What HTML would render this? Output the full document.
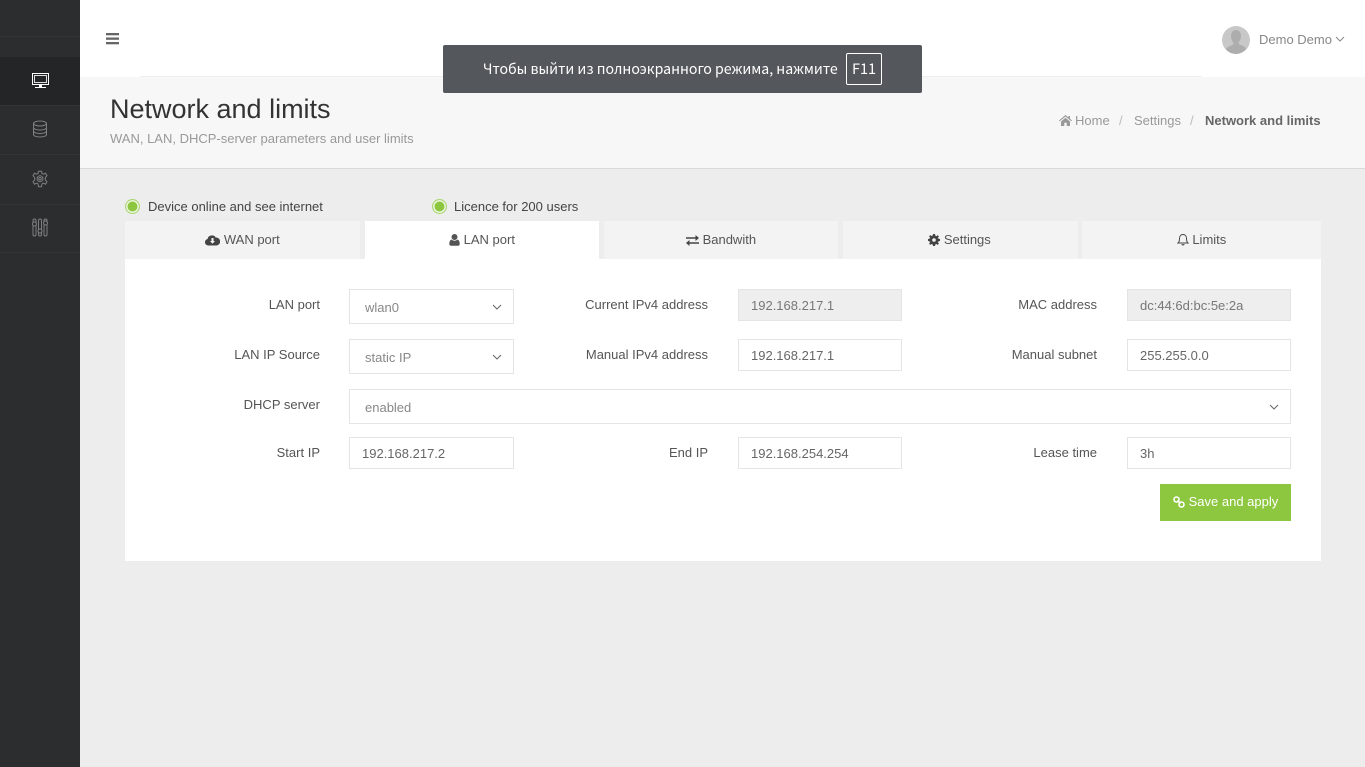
<!DOCTYPE html>
<html lang="en"><head><meta charset="utf-8"><title>Network and limits</title>
<style>
*{box-sizing:border-box}
html,body{margin:0;padding:0;width:1365px;height:767px;overflow:hidden;background:#ededed;font-family:"Liberation Sans",Arial,sans-serif;font-size:13px;color:#555}
.a{position:absolute;white-space:nowrap}
#side{left:0;top:0;width:80px;height:767px;background:#2b2d2f}
.ln{position:absolute;left:0;width:80px;height:1px;background:#323436}
#top{left:80px;top:0;width:1285px;height:77px;background:#fff}
#head{left:80px;top:77px;width:1285px;height:92px;background:#f7f7f7;border-bottom:1px solid #d9d9d9}
.tab{position:absolute;top:221px;height:38px;background:#f3f3f3;line-height:37px;text-align:center;color:#555}
.tab svg{vertical-align:-2px}
.lb{position:absolute;text-align:right;color:#555;line-height:20px;height:20px}
.in{position:absolute;height:32px;width:164px;border:1px solid #e4e4e4;background:#fff;padding-left:12px;line-height:31px;color:#666}
.dis{background:#eee;color:#777}
.sel{position:absolute;height:35px;border:1px solid #e4e4e4;background:#fff;padding-left:15px;line-height:35px;color:#888}
.sel svg{position:absolute;right:11px;top:14px}
.dot{position:absolute;top:199px;width:15px;height:15px;border-radius:50%;background:#8dc63f;border:1px solid #a9d672;box-shadow:inset 0 0 0 1.5px #eef6e2}
</style></head><body>
<div id="side" class="a">
<div class="ln" style="top:36px"></div>
<div class="a" style="left:0;top:57px;width:80px;height:48px;background:#232527"></div>
<div class="ln" style="top:105px"></div><div class="ln" style="top:154px"></div><div class="ln" style="top:204px"></div><div class="ln" style="top:252px"></div>
<svg class="a" style="left:32px;top:73px" width="17" height="16" viewBox="0 0 17 16"><rect x=".5" y=".5" width="16" height="11" fill="none" stroke="#fff"/><rect x="2.500" y="2.500" width="12" height="7" fill="none" stroke="#ddd" stroke-width="1"/><rect x="7" y="12" width="3" height="2" fill="#fff"/><rect x="3" y="14" width="11" height="1" fill="#fff"/></svg>
<svg class="a" style="left:32px;top:120px" width="16" height="18" viewBox="0 0 16 18" fill="none" stroke="#808080" stroke-width="1"><ellipse cx="8" cy="3.500" rx="6.500" ry="2.500"/><path d="M1.500 3.500V14.500C1.500 16 4.500 17 8 17S14.500 16 14.500 14.500V3.500M1.500 7.500C1.500 9 4.500 10 8 10S14.500 9 14.500 7.500M1.500 11C1.500 12.500 4.500 13.500 8 13.500S14.500 12.500 14.500 11"/></svg>
<svg class="a" style="left:32px;top:170px" width="16" height="18" viewBox="0 0 16 18" fill="none" stroke="#808080" stroke-width="1"><path d="M6.500 1H9.500L10 3.300 11.500 4 13.500 3 15 5.500 13.300 7.200V9.800L15 11.500 13.500 14 11.500 13 10 13.700 9.500 16.500H6.500L6 13.700 4.500 13 2.500 14 1 11.500 2.700 9.800V7.200L1 5.500 2.500 3 4.500 4 6 3.300Z" transform="translate(0 .2)"/><circle cx="8" cy="8.700" r="3"/><circle cx="8" cy="8.700" r="1.200"/></svg>
<svg class="a" style="left:32px;top:218px" width="16" height="19" viewBox="0 0 16 19" fill="none" stroke="#808080" stroke-width="1"><rect x="1" y="1" width="3" height="17" rx="1.500"/><rect x="6.500" y="1" width="3" height="17" rx="1.500"/><rect x="12" y="1" width="3" height="17" rx="1.500"/><circle cx="2.500" cy="6" r="2" fill="#2b2d2f"/><circle cx="8" cy="13" r="2" fill="#2b2d2f"/><circle cx="13.500" cy="5" r="2" fill="#2b2d2f"/></svg>
</div>

<div id="top" class="a"></div>
<div class="a" style="left:140px;top:76px;width:1062px;height:1px;background:#eee"></div>
<svg class="a" style="left:106px;top:33px" width="13" height="12" viewBox="0 0 13 12" fill="#666"><rect y="0" width="13" height="2.300"/><rect y="4.500" width="13" height="2.300"/><rect y="9" width="13" height="2.300"/></svg>
<svg class="a" style="left:1222px;top:26px" width="28" height="28" viewBox="0 0 28 28"><circle cx="14" cy="14" r="14" fill="#c8c8c8"/><path d="M14 4c3 0 5 2.500 5 6 0 3-1.500 5.500-2.500 6.500 0 1.500 1.500 2.500 3.500 3 2 .8 3.500 2 4 3.500A14 14 0 0 1 14 28 14 14 0 0 1 4 23.500c.5-1.500 2-2.700 4-3.500 2-.5 3.500-1.500 3.500-3C10.500 15.500 9 13 9 10c0-3.500 2-6 5-6z" fill="#adadad"/></svg>
<div class="a" style="left:1259px;top:30px;line-height:20px;color:#888">Demo Demo</div>
<svg class="a" style="left:1335px;top:36px" width="10" height="7" viewBox="0 0 10 7" fill="none" stroke="#888" stroke-width="1"><path d="M1 1L5 5 9 1"/></svg>

<div id="head" class="a"></div>
<div class="a" style="left:110px;top:93px;font-size:27px;line-height:32px;color:#333">Network and limits</div>
<div class="a" style="left:110px;top:129px;line-height:20px;color:#999">WAN, LAN, DHCP-server parameters and user limits</div>
<svg class="a" style="left:1059px;top:115px" width="13" height="11" viewBox="0 0 13 11" fill="#999"><path d="M6.500 0L0 5.500l.7.800L6.500 1.500l5.800 4.800.7-.8-2-1.700V1H9.500v1.500zM2 6.500V11h3.300V7.800h2.400V11H11V6.500L6.500 2.800z"/></svg>
<div class="a" style="left:1075px;top:111px;line-height:20px;color:#999">Home</div>
<div class="a" style="left:1119px;top:111px;line-height:20px;color:#bbb">/</div>
<div class="a" style="left:1134px;top:111px;line-height:20px;color:#999">Settings</div>
<div class="a" style="left:1190px;top:111px;line-height:20px;color:#bbb">/</div>
<div class="a" style="left:1205px;top:111px;line-height:20px;color:#666;font-weight:bold">Network and limits</div>

<div class="dot" style="left:125px"></div>
<div class="a" style="left:148px;top:197px;line-height:20px;color:#444">Device online and see internet</div>
<div class="dot" style="left:432px"></div>
<div class="a" style="left:454px;top:197px;line-height:20px;color:#444">Licence for 200 users</div>

<div class="tab" style="left:125px;width:235px"><svg width="15" height="12" viewBox="0 0 15 12"><path d="M3.500 11.500A3.300 3.300 0 0 1 2.500 5 4.500 4.500 0 0 1 10.700 3.500 3.900 3.900 0 0 1 11.500 11.500z" fill="#444"/><path d="M6.500 4h2v3H10L7.500 9.800 5 7h1.500z" fill="#f3f3f3"/></svg> WAN port</div>
<div class="tab" style="left:365px;width:234px;background:#fff"><svg width="11" height="12" viewBox="0 0 11 12" fill="#555"><circle cx="5.500" cy="3" r="3"/><path d="M2.500 5.500C1 6 .3 7.500.3 10c0 1 .7 1.800 1.700 1.800h7c1 0 1.700-.8 1.700-1.800 0-2.500-.7-4-2.200-4.500-1.600 1.600-4.400 1.600-6 0z"/></svg> LAN port</div>
<div class="tab" style="left:604px;width:234px"><svg width="13" height="11" viewBox="0 0 13 11" fill="#444"><path d="M0 2.200h9.500V0L13 3 9.500 6V3.800H0zM13 7.200H3.500V5L0 8l3.500 3V8.800H13z"/></svg> Bandwith</div>
<div class="tab" style="left:843px;width:235px;padding-right:2px"><svg width="12" height="12" viewBox="0 0 12 12"><path d="M5 0h2l.3 1.600 1.100.5L9.800 1.200l1.100 1.100-.9 1.400.5 1.100L12 5v2l-1.500.3-.5 1.100.9 1.400-1.100 1.100-1.400-.9-1.100.5L7 12H5l-.3-1.500-1.100-.5-1.400.9-1.100-1.100.9-1.400-.5-1.100L0 7V5l1.500-.3.500-1.100-.9-1.400 1.100-1.100 1.400.9 1.100-.5z" fill="#444"/><circle cx="6" cy="6" r="1.800" fill="#f3f3f3"/></svg> Settings</div>
<div class="tab" style="left:1082px;width:239px"><svg width="12" height="13" viewBox="0 0 12 13" fill="none" stroke="#444"><path d="M1 10c1.200-1 1.500-2.500 1.500-4.500C2.500 3 4 1.500 6 1.500S9.500 3 9.500 5.500c0 2 .3 3.500 1.500 4.500z"/><path d="M5 11a1 1 0 0 0 2 0"/></svg> Limits</div>

<div class="a" style="left:125px;top:259px;width:1196px;height:302px;background:#fff"></div>

<div class="lb" style="left:150px;width:170px;top:295px">LAN port</div>
<div class="lb" style="left:150px;width:170px;top:345px">LAN IP Source</div>
<div class="lb" style="left:150px;width:170px;top:395px">DHCP server</div>
<div class="lb" style="left:150px;width:170px;top:443px">Start IP</div>
<div class="lb" style="left:528px;width:180px;top:295px">Current IPv4 address</div>
<div class="lb" style="left:528px;width:180px;top:345px">Manual IPv4 address</div>
<div class="lb" style="left:528px;width:180px;top:443px">End IP</div>
<div class="lb" style="left:917px;width:180px;top:295px">MAC address</div>
<div class="lb" style="left:917px;width:180px;top:345px">Manual subnet</div>
<div class="lb" style="left:917px;width:180px;top:443px">Lease time</div>

<div class="sel" style="left:349px;top:289px;width:165px">wlan0<svg width="10" height="7" viewBox="0 0 10 7" fill="none" stroke="#666"><path d="M1 1L5 5 9 1"/></svg></div>
<div class="sel" style="left:349px;top:339px;width:165px">static IP<svg width="10" height="7" viewBox="0 0 10 7" fill="none" stroke="#666"><path d="M1 1L5 5 9 1"/></svg></div>
<div class="sel" style="left:349px;top:389px;width:942px">enabled<svg width="10" height="7" viewBox="0 0 10 7" fill="none" stroke="#666"><path d="M1 1L5 5 9 1"/></svg></div>

<div class="in dis" style="left:738px;top:289px">192.168.217.1</div>
<div class="in dis" style="left:1127px;top:289px">dc:44:6d:bc:5e:2a</div>
<div class="in" style="left:738px;top:339px">192.168.217.1</div>
<div class="in" style="left:1127px;top:339px">255.255.0.0</div>
<div class="in" style="left:349px;top:437px;width:165px">192.168.217.2</div>
<div class="in" style="left:738px;top:437px">192.168.254.254</div>
<div class="in" style="left:1127px;top:437px">3h</div>

<div class="a" style="left:1160px;top:484px;width:131px;height:37px;background:#8dc63f;color:#fff;line-height:35px;padding-left:13px"><svg width="12" height="12" viewBox="0 0 12 12" fill="none" stroke="#fff" stroke-width="1.600" style="vertical-align:-2px"><circle cx="3.500" cy="3.500" r="2.500"/><circle cx="8.500" cy="8.500" r="2.500"/><path d="M4.500 4.500L7.500 7.500"/></svg> Save and apply</div>

<div class="a" style="left:443px;top:45px;width:479px;height:48px;background:#54575b;border-radius:2px"></div>
<div class="a" style="left:483px;top:58px;font-family:'Noto Sans CJK SC','DejaVu Sans',sans-serif;font-size:14.150px;line-height:22px;color:#fff">Чтобы выйти из полноэкранного режима, нажмите</div>
<div class="a" style="left:846px;top:53px;width:36px;height:32px;border:1px solid #fff;border-radius:2px;color:#fff;text-align:center;line-height:29px;font-family:'Noto Sans CJK SC','DejaVu Sans',sans-serif;font-size:14.500px">F11</div>
</body></html>
